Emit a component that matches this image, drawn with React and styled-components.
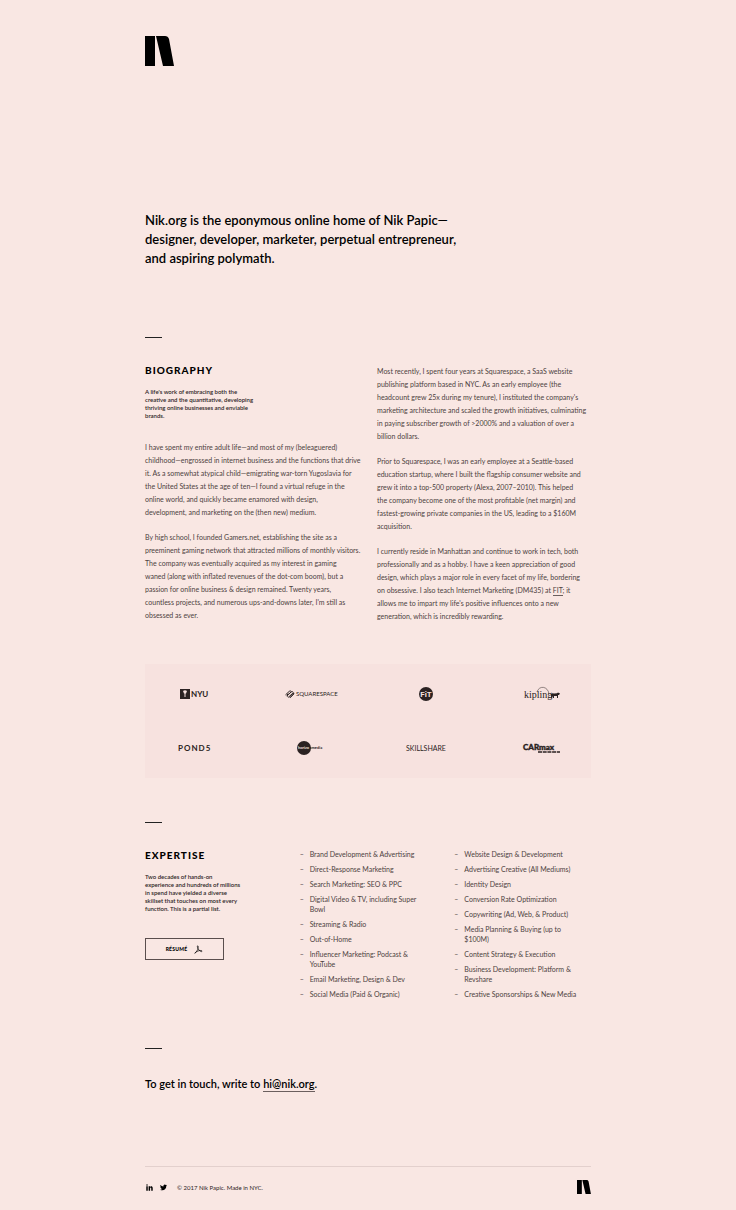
import React from "react";
import styled, { createGlobalStyle } from "styled-components";

const Global = createGlobalStyle`
  * { box-sizing: border-box; margin: 0; padding: 0; }
  body { background: #f9e7e3; color: #000; font-family: Lato, "Liberation Sans", sans-serif; }
`;

const Page = styled.div`
  max-width: 462px;
  margin: 0 auto;
  padding: 36px 8px 15px;
`;
const Mark = styled.svg`
  display: block;
  width: ${(p) => p.$width}px;
  height: auto;
`;
const Statement = styled.h1`
  margin-top: 145px;
  font-size: 13px;
  font-weight: 600;
  line-height: 19px;
  white-space: pre-line;
`;
const Section = styled.section`
  margin-top: ${(p) => p.$gap}px;
  &::before {
    content: "";
    display: block;
    width: 17px;
    height: 1px;
    margin-bottom: 25px;
    background: #222;
  }
`;
const Columns = styled.div`
  display: grid;
  grid-template-columns: repeat(${(p) => p.$count}, minmax(0, 1fr));
  column-gap: 18px;
`;
const Heading = styled.h2`
  font-size: 10px;
  font-weight: 900;
  line-height: 14px;
  letter-spacing: 1px;
`;
const Lead = styled.p`
  margin-top: 11px;
  color: #2c2423;
  font-size: 6px;
  font-weight: 600;
  line-height: 8px;
  white-space: pre-line;
`;
const Copy = styled.div`
  margin-top: ${(p) => p.$top}px;
  color: #4d4241;
  font-size: 7px;
  line-height: 13px;
  white-space: pre;
  p + p { margin-top: 12px; }
  @media (max-width: 480px) { white-space: pre-line; }
`;
const InlineLink = styled.a`
  color: inherit;
  text-decoration: none;
  padding-bottom: 1px;
  border-bottom: 1px solid #6b5f5e;
`;
const Clients = styled.section`
  display: grid;
  grid-template-columns: repeat(4, minmax(0, 1fr));
  grid-auto-rows: 54px;
  column-gap: 18px;
  margin-top: 41px;
  padding: 3px 0;
  background: #f7e2df;
  place-items: center;
`;
const Logo = styled.svg`
  display: block;
  width: ${(p) => p.$width}px;
  height: 16px;
  overflow: visible;
  fill: #2b2222;
`;
const List = styled.ul`
  list-style: none;
  display: grid;
  row-gap: 5px;
  align-content: start;
  padding-top: 1px;
  color: #4d4241;
  font-size: 7px;
  line-height: 10px;
  white-space: pre-line;
`;
const Item = styled.li`
  display: flex;
  &::before { content: "–"; flex: 0 0 10px; }
`;
const Resume = styled.button`
  display: flex;
  align-items: center;
  justify-content: center;
  gap: 7px;
  width: 79px;
  height: 22px;
  margin-top: 25px;
  border: 1px solid #5a4e4d;
  background: transparent;
  color: #000;
  font-family: inherit;
  font-size: 5px;
  font-weight: 900;
  letter-spacing: 0.05em;
`;
const Contact = styled.p`
  font-size: 11px;
  font-weight: 600;
  line-height: 20px;
`;
const Footer = styled.footer`
  display: flex;
  align-items: center;
  gap: 7px;
  margin-top: 72px;
  padding-top: 13px;
  border-top: 1px solid #e3d0cd;
  small { flex: 1; padding-left: 3px; font-size: 6px; color: #2c2423; }
`;
const Social = styled.a`
  display: block;
  color: #000;
  svg { display: block; width: 7px; height: 7px; fill: currentColor; }
  &:first-child { padding-left: 1px; }
`;

const NikMark = ({ width }) => (
  <Mark $width={width} viewBox="0 0 29 30" role="img" aria-label="Nik">
    <path d="M0 0h10v30H0zM11 0h9q3 0 4 3l5 27H18z" />
  </Mark>
);

const left = [
  `I have spent my entire adult life—and most of my (beleaguered)
childhood—engrossed in internet business and the functions that drive
it. As a somewhat atypical child—emigrating war-torn Yugoslavia for
the United States at the age of ten—I found a virtual refuge in the
online world, and quickly became enamored with design,
development, and marketing on the (then new) medium.`,
  `By high school, I founded Gamers.net, establishing the site as a
preeminent gaming network that attracted millions of monthly visitors.
The company was eventually acquired as my interest in gaming
waned (along with inflated revenues of the dot-com boom), but a
passion for online business & design remained. Twenty years,
countless projects, and numerous ups-and-downs later, I'm still as
obsessed as ever.`,
];
const right = [
  `Most recently, I spent four years at Squarespace, a SaaS website
publishing platform based in NYC. As an early employee (the
headcount grew 25x during my tenure), I instituted the company's
marketing architecture and scaled the growth initiatives, culminating
in paying subscriber growth of >2000% and a valuation of over a
billion dollars.`,
  `Prior to Squarespace, I was an early employee at a Seattle-based
education startup, where I built the flagship consumer website and
grew it into a top-500 property (Alexa, 2007–2010). This helped
the company become one of the most profitable (net margin) and
fastest-growing private companies in the US, leading to a $160M
acquisition.`,
];
const skills = [
  [
    "Brand Development & Advertising",
    "Direct-Response Marketing",
    "Search Marketing: SEO & PPC",
    "Digital Video & TV, including Super\nBowl",
    "Streaming & Radio",
    "Out-of-Home",
    "Influencer Marketing: Podcast &\nYouTube",
    "Email Marketing, Design & Dev",
    "Social Media (Paid & Organic)",
  ],
  [
    "Website Design & Development",
    "Advertising Creative (All Mediums)",
    "Identity Design",
    "Conversion Rate Optimization",
    "Copywriting (Ad, Web, & Product)",
    "Media Planning & Buying (up to\n$100M)",
    "Content Strategy & Execution",
    "Business Development: Platform &\nRevshare",
    "Creative Sponsorships & New Media",
  ],
];

const ClientLogos = () => (
  <Clients aria-label="Clients">
    <Logo $width={28} viewBox="0 0 28 16">
      <path d="M0 3h10v10H0z" />
      <path d="M3 5q2-1.500 4 0l-1 2.500h-.500V11h-1V7.500H4z" fill="#f7e2df" />
      <text x="11" y="11" fontSize="8" fontWeight="700">NYU</text>
    </Logo>
    <Logo $width={51} viewBox="0 0 51 16">
      <g fill="none" stroke="#2b2222" strokeWidth="1" strokeLinecap="round">
        <path d="M.8 8.600 4.300 5.300Q5.200 4.500 6.100 5.200M2.100 9.700 6.200 5.900Q7.200 5.100 8 6M2.900 10.900Q3.800 11.600 4.700 10.800L8.800 7M2.800 7.900Q1.500 9.100 2.200 10M4.500 10.200 7.800 7.200Q8.800 6.500 9 7.900L5.400 11.500" />
      </g>
      <text x="11" y="10" fontSize="6">SQUARESPACE</text>
    </Logo>
    <Logo $width={14} viewBox="0 0 14 16">
      <circle cx="7" cy="8" r="7" />
      <text x="7" y="11" fontSize="8" fontWeight="700" textAnchor="middle" fill="#f7e2df" fontFamily="Roboto, sans-serif">FiT</text>
    </Logo>
    <Logo $width={36} viewBox="0 0 36 16">
      <path d="M13 6C15-1 24 0 25 8" fill="none" stroke="#2b2222" strokeWidth=".5" />
      <text x="0" y="12" fontSize="10" fontFamily="Liberation Serif, serif">kipling</text>
      <path d="M27 8q1-1 3-.500l3-.300 1-.700 2 1-1 1.500h-1V12h-1v-2h-3v2h-1v-2l-1 2h-1V9z" />
    </Logo>
    <Logo $width={32} viewBox="0 0 32 16">
      <text x="0" y="11" fontSize="8" fontWeight="700" letterSpacing="1">POND5</text>
    </Logo>
    <Logo $width={26} viewBox="0 0 26 16">
      <circle cx="7" cy="8" r="7" />
      <text x="1" y="9" fontSize="4" fontWeight="700"><tspan fill="#f7e2df">horizo</tspan>nmedia</text>
    </Logo>
    <Logo $width={40} viewBox="0 0 40 16">
      <text x="0" y="11" fontSize="7">SKILLSHARE</text>
    </Logo>
    <Logo $width={38} viewBox="0 0 38 16">
      <text x="0" y="10" fontSize="8" fontWeight="900" stroke="#2b2222" strokeWidth=".4">CARmax</text>
      <path d="M15 12h22" stroke="#2b2222" strokeWidth="1.500" strokeDasharray="4 .7" />
    </Logo>
  </Clients>
);

export default function App() {
  return (
    <>
      <Global />
      <Page>
        <header>
          <NikMark width={29} />
        </header>
        <main>
          <Statement>{`Nik.org is the eponymous online home of Nik Papic—
designer, developer, marketer, perpetual entrepreneur,
and aspiring polymath.`}</Statement>
          <Section $gap={69}>
            <Columns $count={2}>
              <div>
                <Heading>BIOGRAPHY</Heading>
                <Lead>{`A life's work of embracing both the
creative and the quantitative, developing
thriving online businesses and enviable
brands.`}</Lead>
                <Copy $top={21}>
                  {left.map((t) => <p key={t}>{t}</p>)}
                </Copy>
              </div>
              <Copy $top={2}>
                {right.map((t) => <p key={t}>{t}</p>)}
                <p>
                  {`I currently reside in Manhattan and continue to work in tech, both
professionally and as a hobby. I have a keen appreciation of good
design, which plays a major role in every facet of my life, bordering
on obsessive. I also teach Internet Marketing (DM435) at `}
                  <InlineLink href="#fit">FIT</InlineLink>
                  {`; it
allows me to impart my life's positive influences onto a new
generation, which is incredibly rewarding.`}
                </p>
              </Copy>
            </Columns>
          </Section>
          <ClientLogos />
          <Section $gap={44}>
            <Columns $count={3}>
              <div>
                <Heading>EXPERTISE</Heading>
                <Lead>{`Two decades of hands-on
experience and hundreds of millions
in spend have yielded a diverse
skillset that touches on most every
function. This is a partial list.`}</Lead>
                <Resume type="button">
                  RÉSUMÉ
                  <svg width="9" height="9" viewBox="0 0 9 9" fill="none" stroke="#000" strokeWidth=".7" aria-hidden="true">
                    <path d="M1 8C3 7 5 2 4 1S3 3 5 5s3 2 3 1-4-.500-6 1-1 1.500-1 1z" />
                  </svg>
                </Resume>
              </div>
              {skills.map((items) => (
                <List key={items[0]}>
                  {items.map((t) => <Item key={t}><span>{t}</span></Item>)}
                </List>
              ))}
            </Columns>
          </Section>
          <Section $gap={49}>
            <Contact>
              To get in touch, write to <InlineLink href="mailto:hi@nik.org">hi@nik.org</InlineLink>.
            </Contact>
          </Section>
        </main>
        <Footer>
          <Social href="#linkedin" aria-label="LinkedIn">
            <svg viewBox="0 0 24 24"><path d="M1 8h5v15H1zM3.500 1a2.600 2.600 0 1 1 0 5.200 2.600 2.600 0 0 1 0-5.200zM9 8h5v2c2-3.500 9-3.500 9 4v9h-5v-8c0-4-4-4-4 0v8H9z" /></svg>
          </Social>
          <Social href="#twitter" aria-label="Twitter">
            <svg viewBox="0 0 24 24"><path d="M23.950 4.570a10 10 0 0 1-2.820.770 4.960 4.960 0 0 0 2.160-2.720c-.950.550-2 .950-3.130 1.180a4.920 4.920 0 0 0-8.380 4.480C7.690 8.090 4.070 6.130 1.640 3.160a4.920 4.920 0 0 0 1.520 6.570 4.900 4.900 0 0 1-2.230-.610v.060a4.920 4.920 0 0 0 3.950 4.830 5 5 0 0 1-2.210.080 4.930 4.930 0 0 0 4.600 3.420A9.870 9.870 0 0 1 0 19.540a14 14 0 0 0 7.550 2.210c9.050 0 14-7.500 14-13.980v-.640a9.900 9.900 0 0 0 2.400-2.560z" /></svg>
          </Social>
          <small>© 2017 Nik Papic. Made in NYC.</small>
          <NikMark width={14} />
        </Footer>
      </Page>
    </>
  );
}
